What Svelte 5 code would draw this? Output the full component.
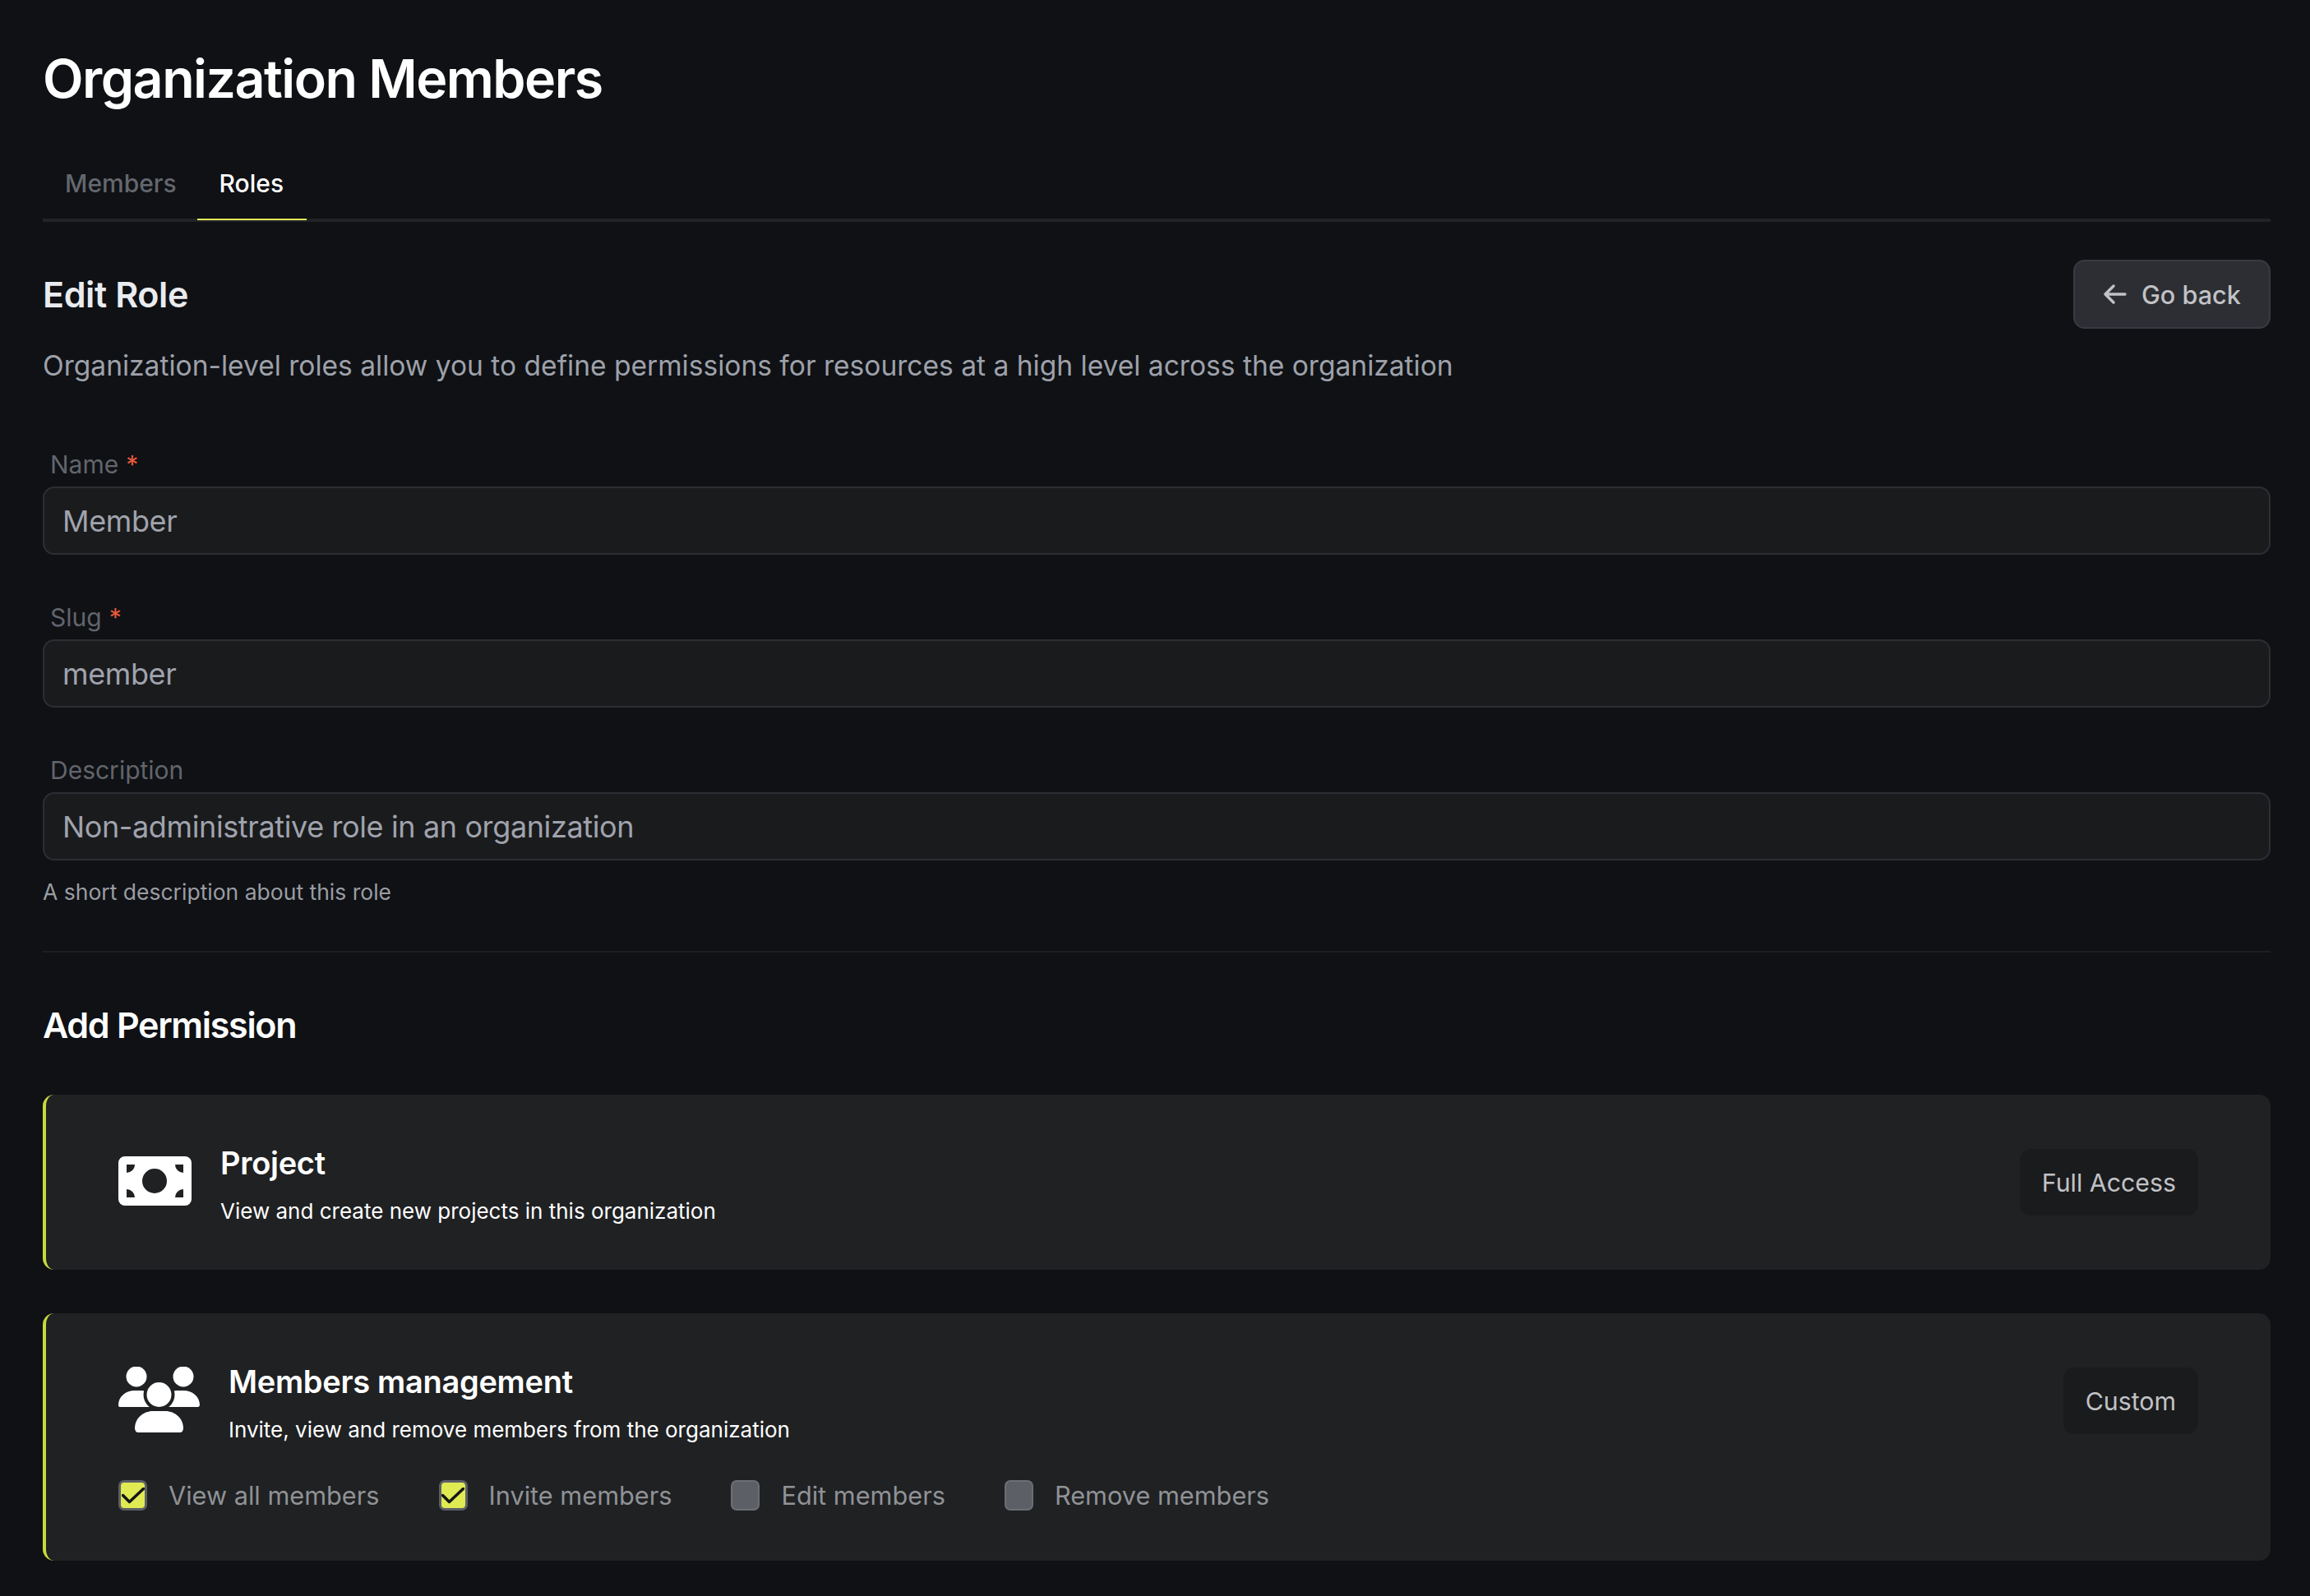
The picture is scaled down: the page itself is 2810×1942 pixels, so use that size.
<script lang="ts">
  type Perm = { label: string; checked: boolean };

  const fields = [
    { label: 'Name', value: 'Member', required: true, hint: '' },
    { label: 'Slug', value: 'member', required: true, hint: '' },
    {
      label: 'Description',
      value: 'Non-administrative role in an organization',
      required: false,
      hint: 'A short description about this role'
    }
  ];

  const memberPerms: Perm[] = [
    { label: 'View all members', checked: true },
    { label: 'Invite members', checked: true },
    { label: 'Edit members', checked: false },
    { label: 'Remove members', checked: false }
  ];
</script>

<main class="page">
  <h1 class="title">Organization Members</h1>

  <nav class="tabs">
    <span class="tab">Members</span>
    <span class="tab active">Roles</span>
  </nav>

  <header class="section-head">
    <h2 class="heading">Edit Role</h2>
    <button class="back" type="button">
      <svg width="28" height="24" viewBox="0 0 28 24" fill="none" stroke="currentColor" stroke-width="3.4" stroke-linecap="round" stroke-linejoin="round">
        <path d="M2 12h24M12 2 2 12l10 10" />
      </svg>
      Go back
    </button>
  </header>
  <p class="lead">Organization-level roles allow you to define permissions for resources at a high level across the organization</p>

  <form class="form">
    {#each fields as f}
      <div class="field">
        <label class="label" for={f.label}>{f.label}{#if f.required}<span class="req">*</span>{/if}</label>
        <input class="input" id={f.label} readonly value={f.value} />
        {#if f.hint}<p class="hint">{f.hint}</p>{/if}
      </div>
    {/each}
  </form>

  <hr class="rule" />

  <h2 class="heading add">Add Permission</h2>

  <section class="card">
    <div class="card-row">
      <svg class="icon" width="89" height="60" viewBox="0 0 89 60">
        <path
          fill="#fff"
          fill-rule="evenodd"
          d="M8 0h73a8 8 0 0 1 8 8v44a8 8 0 0 1-8 8H8a8 8 0 0 1-8-8V8a8 8 0 0 1 8-8ZM29 30a15 15 0 1 0 30 0a15 15 0 1 0-30 0ZM10 10v10a10 10 0 0 0 10-10ZM79 10H69a10 10 0 0 0 10 10ZM10 50h10a10 10 0 0 0-10-10ZM79 50V40a10 10 0 0 0-10 10Z"
        />
      </svg>
      <div class="card-text">
        <h3 class="card-title">Project</h3>
        <p class="card-sub">View and create new projects in this organization</p>
      </div>
      <span class="badge">Full Access</span>
    </div>
  </section>

  <section class="card">
    <div class="card-row">
      <svg class="icon" width="99" height="80" viewBox="0 0 99 80">
        <circle cx="22" cy="12" r="12.5" fill="#fff" />
        <circle cx="79" cy="12" r="12.5" fill="#fff" />
        <path fill="#fff" d="M0 47c0-11 9-18 20-18h8c7 0 12 4 16 9v11H2.500C1 49 0 48.500 0 47ZM99 47c0-11-9-18-20-18h-8c-7 0-12 4-16 9v11h41.500c1.500 0 2.500-1 2.500-3Z" />
        <circle cx="49.500" cy="34" r="19" fill="#1f2123" />
        <circle cx="49.500" cy="34" r="15" fill="#fff" />
        <path fill="#fff" d="M20 75c0-12 10-21 22-21h15c12 0 22 9 22 21 0 3-2 5-4 5H24c-2 0-4-2-4-5Z" />
      </svg>
      <div class="card-text">
        <h3 class="card-title">Members management</h3>
        <p class="card-sub">Invite, view and remove members from the organization</p>
      </div>
      <span class="badge">Custom</span>
    </div>
    <div class="perms">
      {#each memberPerms as p}
        <label class="perm">
          <span class="box" class:on={p.checked}>
            {#if p.checked}
              <svg width="28" height="20" viewBox="0 0 28 20" fill="none" stroke="#15161a" stroke-width="3.500" stroke-linecap="round" stroke-linejoin="round">
                <path d="M1.500 9.500l8 8 17-16" />
              </svg>
            {/if}
          </span>
          {p.label}
        </label>
      {/each}
    </div>
  </section>
</main>

<style>
  :global(body) {
    margin: 0;
    background: #0f1115;
  }

  .page {
    box-sizing: border-box;
    height: 1942px;
    padding: 56px 48px 0 52px;
    overflow: hidden;
    font-family: Inter, "Liberation Sans", sans-serif;
  }

  .title {
    margin: 0;
    font-size: 64.5px;
    line-height: 80px;
    font-weight: 600;
    letter-spacing: -1.5px;
    color: #fff;
  }

  /* tabs */

  .tabs {
    display: flex;
    margin-top: 47px;
    border-bottom: 4px solid #212327;
  }

  .tab {
    padding: 22px 27px 25px;
    font-size: 30px;
    line-height: 36px;
    font-weight: 500;
    color: #64676e;
    margin-bottom: -2px;
    border-bottom: 2px solid transparent;
  }

  .tab.active {
    margin-left: -2px;
    padding-right: 28px;
    color: #fff;
    border-bottom-color: #e3ef55;
  }

  /* heading */

  .section-head {
    display: flex;
    align-items: center;
    justify-content: space-between;
    margin-top: 46px;
  }

  .heading {
    margin: 0;
    font-size: 43px;
    line-height: 56px;
    font-weight: 600;
    letter-spacing: -0.4px;
    color: #e9ecef;
  }

  .back {
    display: flex;
    align-items: center;
    gap: 18px;
    box-sizing: border-box;
    width: 240px;
    height: 84px;
    padding: 0 35px;
    background: #2c2e33;
    border: 2px solid #373a40;
    border-radius: 14px;
    color: #c1c2c5;
    font: 500 30.6px Inter, "Liberation Sans", sans-serif;
    white-space: nowrap;
  }

  .back svg {
    flex: none;
  }

  .lead {
    margin: 22px 0 0;
    font-size: 33.55px;
    line-height: 46px;
    color: #9ea1aa;
  }

  /* form */

  .form {
    display: flex;
    flex-direction: column;
    gap: 58px;
    margin-top: 79px;
  }

  .label {
    display: block;
    padding-left: 9px;
    margin-bottom: 9px;
    font-size: 30px;
    line-height: 36px;
    color: #62656c;
  }

  .req {
    margin-left: 9px;
    color: #e8593c;
  }

  .input {
    display: block;
    box-sizing: border-box;
    width: 100%;
    height: 83px;
    padding: 0 22px;
    background: #1a1b1d;
    border: 2px solid #2c2e33;
    border-radius: 14px;
    color: #a0a3ad;
    font: 400 36px Inter, "Liberation Sans", sans-serif;
    letter-spacing: -0.38px;
    outline: none;
  }

  .hint {
    margin: 22px 0 0;
    font-size: 26.5px;
    line-height: 32px;
    color: #9a9da3;
  }

  .rule {
    margin: 56px 0 0;
    border: 0;
    border-top: 2px solid #1c1e22;
  }

  .add {
    margin-top: 60px;
    letter-spacing: -1.3px;
    color: #fff;
  }

  /* permission cards */

  .card {
    margin-top: 53px;
    padding: 66px 88px 61px 88px;
    background: #1f2123;
    border-left: 4px solid #c9d93a;
    border-radius: 14px;
  }

  .add + .card {
    margin-top: 57px;
  }

  .card-row {
    display: flex;
    align-items: center;
    height: 81px;
  }

  .card-row:only-child {
    margin-bottom: 5px;
  }

  .icon {
    flex: none;
    margin-top: -4px;
  }

  .card-text {
    flex: 1;
    margin-left: 35px;
    padding-top: 4px;
    color: #fff;
  }

  .card-title {
    margin: 0;
    font-size: 38px;
    line-height: 48px;
    font-weight: 600;
    letter-spacing: -0.3px;
  }

  .card-sub {
    margin: 19px 0 0;
    font-size: 26px;
    line-height: 32px;
  }

  .badge {
    display: flex;
    align-items: center;
    box-sizing: border-box;
    height: 81px;
    padding: 0 27px;
    background: #1a1b1d;
    border-radius: 14px;
    font-size: 30.3px;
    color: #c1c2c5;
  }

  .perms {
    display: flex;
    gap: 72px;
    margin-top: 56px;
  }

  .perm {
    display: flex;
    align-items: center;
    gap: 26px;
    font-size: 30.7px;
    line-height: 36px;
    color: #909296;
  }

  .box {
    display: flex;
    align-items: center;
    justify-content: center;
    box-sizing: border-box;
    width: 35px;
    height: 37px;
    background: #5c5f66;
    border: 2px solid #6b6e75;
    border-radius: 7px;
  }

  .box.on {
    background: #e0ea52;
    border: 3px solid #5c5f66;
  }
</style>
